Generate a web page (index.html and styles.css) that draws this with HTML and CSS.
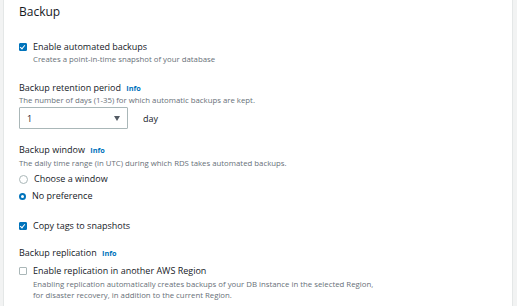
FILE: index.html
```html
<!DOCTYPE html>
<html lang="en">
<head>
    <meta charset="UTF-8">
    <title>Backup</title>
    <link rel="stylesheet" href="styles.css">
</head>
<body>
    <div class="panel">
        <h2 class="title">Backup</h2>

        <div class="field first">
            <label class="check">
                <span class="box checked"></span>
                <span class="check-label">Enable automated backups</span>
            </label>
            <p class="hint indent">Creates a point-in-time snapshot of your database</p>
        </div>

        <div class="field">
            <div class="label">Backup retention period <a class="info">Info</a></div>
            <p class="hint">The number of days (1-35) for which automatic backups are kept.</p>
            <div class="select-row">
                <div class="select">
                    <span>1</span>
                    <span class="caret"></span>
                </div>
                <span class="unit">day</span>
            </div>
        </div>

        <div class="field window">
            <div class="label">Backup window <a class="info">Info</a></div>
            <p class="hint">The daily time range (in UTC) during which RDS takes automated backups.</p>
            <div class="radios">
                <label class="check">
                    <span class="radio"></span>
                    <span class="check-label">Choose a window</span>
                </label>
                <label class="check">
                    <span class="radio selected"></span>
                    <span class="check-label">No preference</span>
                </label>
            </div>
        </div>

        <div class="field tags">
            <label class="check">
                <span class="box checked"></span>
                <span class="check-label">Copy tags to snapshots</span>
            </label>
        </div>

        <div class="field replication">
            <div class="label">Backup replication <a class="info">Info</a></div>
            <label class="check">
                <span class="box"></span>
                <span class="check-label">Enable replication in another AWS Region</span>
            </label>
            <p class="hint indent">Enabling replication automatically creates backups of your DB instance in the selected Region,<br>for disaster recovery, in addition to the current Region.</p>
        </div>
    </div>
</body>
</html>
```

FILE: styles.css
```css
body {
    margin: 0;
    background-color: #f2f3f3;
    font-family: "Open Sans", "Noto Sans", sans-serif;
    color: #16191f;
}

.panel {
    margin-left: 3px;
    width: 493px;
    height: 306px;
    background: #fff;
    border-left: 1px solid #e4e7e7;
    border-right: 1px solid #e4e7e7;
    padding: 0 0 0 15px;
    overflow: hidden;
}

.title {
    margin: 0;
    padding-top: 2px;
    font-size: 12px;
    font-weight: 400;
    line-height: 20px;
}

.field {
    margin-top: 16px;
}

.field.first {
    margin-top: 18px;
}

.field.window {
    margin-top: 14px;
}

.field.window .hint {
    margin-top: 1px;
}

.field.tags {
    margin-top: 16px;
}

.field.replication {
    margin-top: 13px;
}

.field.replication .check {
    margin-top: 4px;
}

.field.replication .hint {
    margin-top: 1px;
}

.label {
    font-size: 9px;
    line-height: 14px;
}

.info {
    margin-left: 3px;
    color: #0073bb;
    font-size: 7.3px;
    font-weight: 700;
}

.hint {
    margin: 0;
    font-size: 7.8px;
    line-height: 11px;
    color: #687078;
}

.hint.indent {
    padding-left: 14px;
}

.check {
    display: flex;
    align-items: center;
    gap: 6px;
    font-size: 9px;
    line-height: 14px;
}

.box {
    width: 6px;
    height: 6px;
    border: 1px solid #aab7b8;
    border-radius: 1px;
    position: relative;
}

.box.checked {
    background: #0073bb;
    border-color: #0073bb;
}

.box.checked::after {
    content: "";
    position: absolute;
    left: 1px;
    top: 0;
    width: 2px;
    height: 4px;
    border: solid #fff;
    border-width: 0 1.3px 1.3px 0;
    transform: rotate(40deg);
}

.select-row {
    display: flex;
    align-items: center;
    gap: 15px;
    margin-top: 1px;
}

.select {
    width: 93px;
    height: 20px;
    border: 1px solid #aab7b8;
    border-radius: 1px;
    display: flex;
    align-items: center;
    justify-content: space-between;
    padding: 0 7px;
    font-size: 9px;
}

.caret {
    width: 0;
    height: 0;
    border-left: 3.5px solid transparent;
    border-right: 3.5px solid transparent;
    border-top: 5px solid #545b64;
}

.unit {
    font-size: 9px;
}

.radios {
    display: flex;
    flex-direction: column;
    gap: 3px;
    margin-top: 3px;
}

.radio {
    width: 7px;
    height: 7px;
    border: 1px solid #aab7b8;
    border-radius: 50%;
}

.radio.selected {
    border: 2.5px solid #0073bb;
    width: 3px;
    height: 3px;
}
```
